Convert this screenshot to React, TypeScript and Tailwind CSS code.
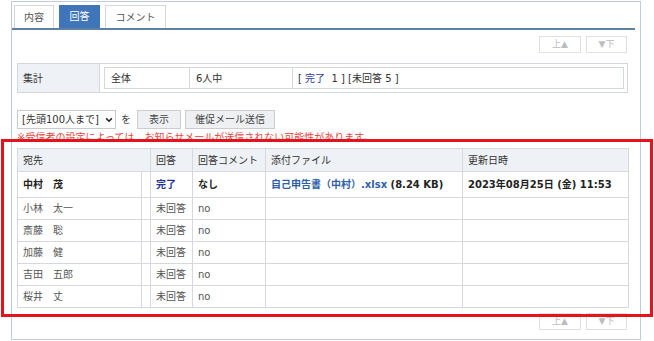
import React from "react";

const font = { fontFamily: '"DejaVu Sans", "Noto Sans CJK JP", sans-serif' };

function NavButtons() {
  return (
    <div className="flex justify-end gap-[5px] pr-[1px]">
      <div className="w-[42px] h-[17px] border border-[#dcdfe3] bg-white flex items-center justify-center text-[9px] text-[#b9bdc2]">
        上▲
      </div>
      <div className="w-[41px] h-[17px] border border-[#dcdfe3] bg-white flex items-center justify-center text-[9px] text-[#b9bdc2]">
        ▼下
      </div>
    </div>
  );
}

const rows = [
  { name: "小林　太一" },
  { name: "斎藤　聡" },
  { name: "加藤　健" },
  { name: "吉田　五郎" },
  { name: "桜井　丈" },
];

export default function App() {
  return (
    <div className="relative w-[654px] h-[341px] bg-white overflow-hidden text-[10px] text-[#333]" style={font}>
      <div className="ml-[11px] mt-[1px] w-[630px] h-[339px] border border-[#bccbdd] flex flex-col">
        {/* tabs */}
        <div className="pl-[2px] pt-[3px] mr-[5px] flex gap-[5px] border-b-2 border-[#5f7fa3]">
          <div className="w-[40px] h-[23px] border border-b-0 border-[#d3d6da] flex items-center justify-center text-[#555]">内容</div>
          <div className="w-[41px] h-[23px] bg-[#4075b9] flex items-center justify-center text-white">回答</div>
          <div className="w-[61px] h-[23px] border border-b-0 border-[#d3d6da] flex items-center justify-center text-[#555]">コメント</div>
        </div>

        <div className="pl-[5px] pr-[12px] flex flex-col">
          <div className="mt-[6px]">
            <NavButtons />
          </div>

          {/* summary */}
          <div className="mt-[10px] h-[30px] border border-[#d3d8df] flex">
            <div className="w-[82px] bg-[#eef1f6] border-r border-[#d3d8df] flex items-center pl-[5px] text-[#333]">集計</div>
            <div className="flex-1 flex items-center pl-[4px] pr-[3px]">
              <div className="flex-1 h-[22px] border border-[#d3d8df] flex">
                <div className="w-[85px] border-r border-[#d3d8df] flex items-center pl-[6px]">全体</div>
                <div className="w-[103px] border-r border-[#d3d8df] flex items-center pl-[6px]">6人中</div>
                <div className="flex-1 flex items-center pl-[5px] whitespace-pre">
                  <span>[ </span>
                  <span className="text-[#2a3c9e]">完了</span>
                  <span>  1 ] [未回答 5 ]</span>
                </div>
              </div>
            </div>
          </div>

          {/* controls */}
          <div className="mt-[17px] flex items-center h-[19px]">
            <div className="w-[99px] h-[19px] border border-[#c7cbd0] bg-white flex items-center pl-[4px] pr-[2px] justify-between text-[#333]">
              <span className="whitespace-nowrap">[先頭100人まで]</span>
              <svg width="8" height="8" viewBox="0 0 10 10" className="shrink-0">
                <path d="M1.5 3 L5 6.5 L8.5 3" fill="none" stroke="#222" strokeWidth="2" />
              </svg>
            </div>
            <span className="ml-[5px] text-[#444]">を</span>
            <div className="ml-[6px] w-[44px] h-[19px] border border-[#c9cdd2] bg-[#eef0f3] flex items-center justify-center text-[#444]">表示</div>
            <div className="ml-[4px] w-[90px] h-[19px] border border-[#c9cdd2] bg-[#eef0f3] flex items-center justify-center text-[#444]">催促メール送信</div>
          </div>
          <div className="mt-[1px] h-[16px] leading-[16px] text-[#e8453c] whitespace-nowrap">
            ※受信者の設定によっては、お知らせメールが送信されない可能性があります。
          </div>

          {/* table */}
          <table className="mt-[2px] w-[611px] table-fixed border-collapse border border-[#d5d9df]">
            <colgroup>
              <col className="w-[124px]" />
              <col className="w-[9px]" />
              <col className="w-[42px]" />
              <col className="w-[73px]" />
              <col className="w-[197px]" />
              <col className="w-[166px]" />
            </colgroup>
            <thead>
              <tr className="h-[23px] bg-[#eef1f6]">
                <th colSpan={2} className="border border-[#d5d9df] text-left font-normal pl-[5px]">宛先</th>
                <th className="border border-[#d5d9df] text-left font-normal pl-[5px]">回答</th>
                <th className="border border-[#d5d9df] text-left font-normal pl-[5px]">回答コメント</th>
                <th className="border border-[#d5d9df] text-left font-normal pl-[5px]">添付ファイル</th>
                <th className="border border-[#d5d9df] text-left font-normal pl-[5px]">更新日時</th>
              </tr>
            </thead>
            <tbody>
              <tr className="h-[26px] font-bold text-[#222]">
                <td className="border border-[#d5d9df] pl-[5px] whitespace-nowrap">中村　茂</td>
                <td className="border border-[#d5d9df]"></td>
                <td className="border border-[#d5d9df] pl-[5px] text-[#24339c]">完了</td>
                <td className="border border-[#d5d9df] pl-[5px]">なし</td>
                <td className="border border-[#d5d9df] pl-[5px] whitespace-nowrap">
                  <span className="text-[#2d5fa8]">自己申告書（中村）.xlsx</span> (8.24 KB)
                </td>
                <td className="border border-[#d5d9df] pl-[5px] whitespace-nowrap">2023年08月25日 (金) 11:53</td>
              </tr>
              {rows.map((r) => (
                <tr key={r.name} className="h-[22px] text-[#555]">
                  <td className="border border-[#d5d9df] pl-[5px] whitespace-nowrap">{r.name}</td>
                  <td className="border border-[#d5d9df]"></td>
                  <td className="border border-[#d5d9df] pl-[5px] whitespace-nowrap">未回答</td>
                  <td className="border border-[#d5d9df] pl-[5px]">no</td>
                  <td className="border border-[#d5d9df]"></td>
                  <td className="border border-[#d5d9df]"></td>
                </tr>
              ))}
            </tbody>
          </table>

          <div className="mt-[5px]">
            <NavButtons />
          </div>
        </div>
      </div>

      {/* red highlight frame */}
      <div className="absolute left-[1px] top-[139px] w-[652px] h-[178px] border-[3px] border-[#e5141c] pointer-events-none" />
    </div>
  );
}
